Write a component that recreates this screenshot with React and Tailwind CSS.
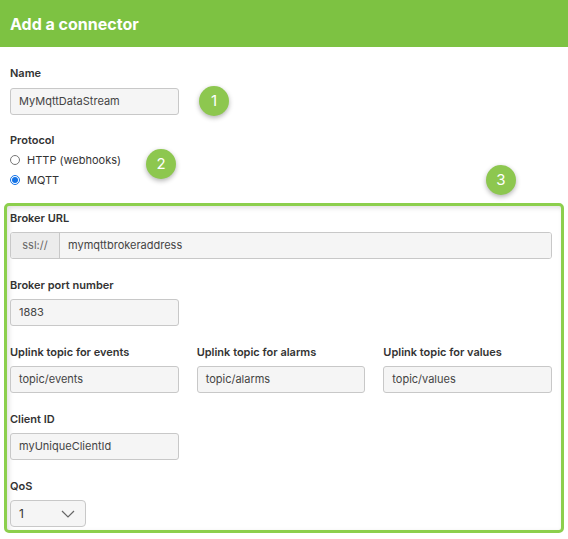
import { useState } from 'react';

const font = { fontFamily: 'Inter, "Noto Sans", "Liberation Sans", sans-serif' };

function Badge({ n, className }) {
    return (
        <div
            className={`absolute w-[30px] h-[30px] rounded-full bg-[#8dc74f] text-white text-[15px] flex items-center justify-center shadow-[0_2px_5px_rgba(0,0,0,0.3)] ${className}`}
        >
            {n}
        </div>
    );
}

function Label({ children }) {
    return <div className="h-4 leading-4 text-[11px] font-semibold text-[#333] mb-[6px]">{children}</div>;
}

function TextInput({ value, className = 'w-[169px]' }) {
    return (
        <div
            className={`h-[27px] bg-[#f5f5f5] border border-[#c8c8c8] rounded-[3px] px-[8px] flex items-center text-[11px] text-[#444] ${className}`}
        >
            {value}
        </div>
    );
}

export default function App() {
    const [protocol, setProtocol] = useState('mqtt');

    return (
        <div className="relative w-[568px] h-[539px] bg-white overflow-hidden" style={font}>
            <div className="h-[47px] bg-[#7dc242] flex items-center px-[10px]">
                <h1 className="text-white text-[16px] font-bold">Add a connector</h1>
            </div>

            <div className="pt-[18px] px-[10px]">
                <div className="h-4 leading-4 text-[11px] font-semibold text-[#333] mb-[7px]">Name</div>
                <TextInput value="MyMqttDataStream" />

                <div className="mt-[17px] h-4 leading-4 text-[11px] font-semibold text-[#333] mb-[2px]">Protocol</div>
                <label className="h-5 flex items-center gap-[7px] text-[11px] text-[#333]">
                    <input
                        type="radio"
                        name="protocol"
                        checked={protocol === 'http'}
                        onChange={() => setProtocol('http')}
                        className="w-[10px] h-[10px] m-0 accent-[#1473e6]"
                    />
                    HTTP (webhooks)
                </label>
                <label className="h-5 flex items-center gap-[7px] text-[11px] text-[#333]">
                    <input
                        type="radio"
                        name="protocol"
                        checked={protocol === 'mqtt'}
                        onChange={() => setProtocol('mqtt')}
                        className="w-[10px] h-[10px] m-0 accent-[#1473e6]"
                    />
                    MQTT
                </label>
            </div>

            <div className="mt-[13px] ml-[4px] w-[560px] border-[3px] border-[#8ccf4d] rounded-[5px] pt-[4px] pb-[3px] pl-[3px] pr-[9px] shadow-[inset_2px_2px_5px_rgba(0,0,0,0.12)]">
                <Label>Broker URL</Label>
                <div className="flex h-[27px] border border-[#c8c8c8] rounded-[3px] overflow-hidden text-[11px]">
                    <div className="w-[49px] bg-[#ececec] text-[#666] flex items-center justify-center border-r border-[#c8c8c8]">
                        ssl://
                    </div>
                    <div className="flex-1 bg-[#f5f5f5] text-[#444] flex items-center px-[8px]">mymqttbrokeraddress</div>
                </div>

                <div className="mt-[18px]">
                    <Label>Broker port number</Label>
                    <TextInput value="1883" />
                </div>

                <div className="mt-[18px] grid grid-cols-3 gap-x-[18px]">
                    <div>
                        <Label>Uplink topic for events</Label>
                        <TextInput value="topic/events" className="w-full" />
                    </div>
                    <div>
                        <Label>Uplink topic for alarms</Label>
                        <TextInput value="topic/alarms" className="w-full" />
                    </div>
                    <div>
                        <Label>Uplink topic for values</Label>
                        <TextInput value="topic/values" className="w-full" />
                    </div>
                </div>

                <div className="mt-[18px]">
                    <Label>Client ID</Label>
                    <TextInput value="myUniqueClientId" />
                </div>

                <div className="mt-[18px]">
                    <Label>QoS</Label>
                    <div className="w-[76px] h-[27px] bg-[#f5f5f5] border border-[#c8c8c8] rounded-[4px] flex items-center justify-between pl-[8px] pr-[10px] text-[12px] text-[#333]">
                        <span>1</span>
                        <svg width="14" height="8" viewBox="0 0 14 8" fill="none">
                            <path d="M1 1l6 6 6-6" stroke="#666" strokeWidth="1.2" />
                        </svg>
                    </div>
                </div>
            </div>

            <Badge n="1" className="left-[199px] top-[86px]" />
            <Badge n="2" className="left-[146px] top-[149px]" />
            <Badge n="3" className="left-[486px] top-[165px]" />
        </div>
    );
}
